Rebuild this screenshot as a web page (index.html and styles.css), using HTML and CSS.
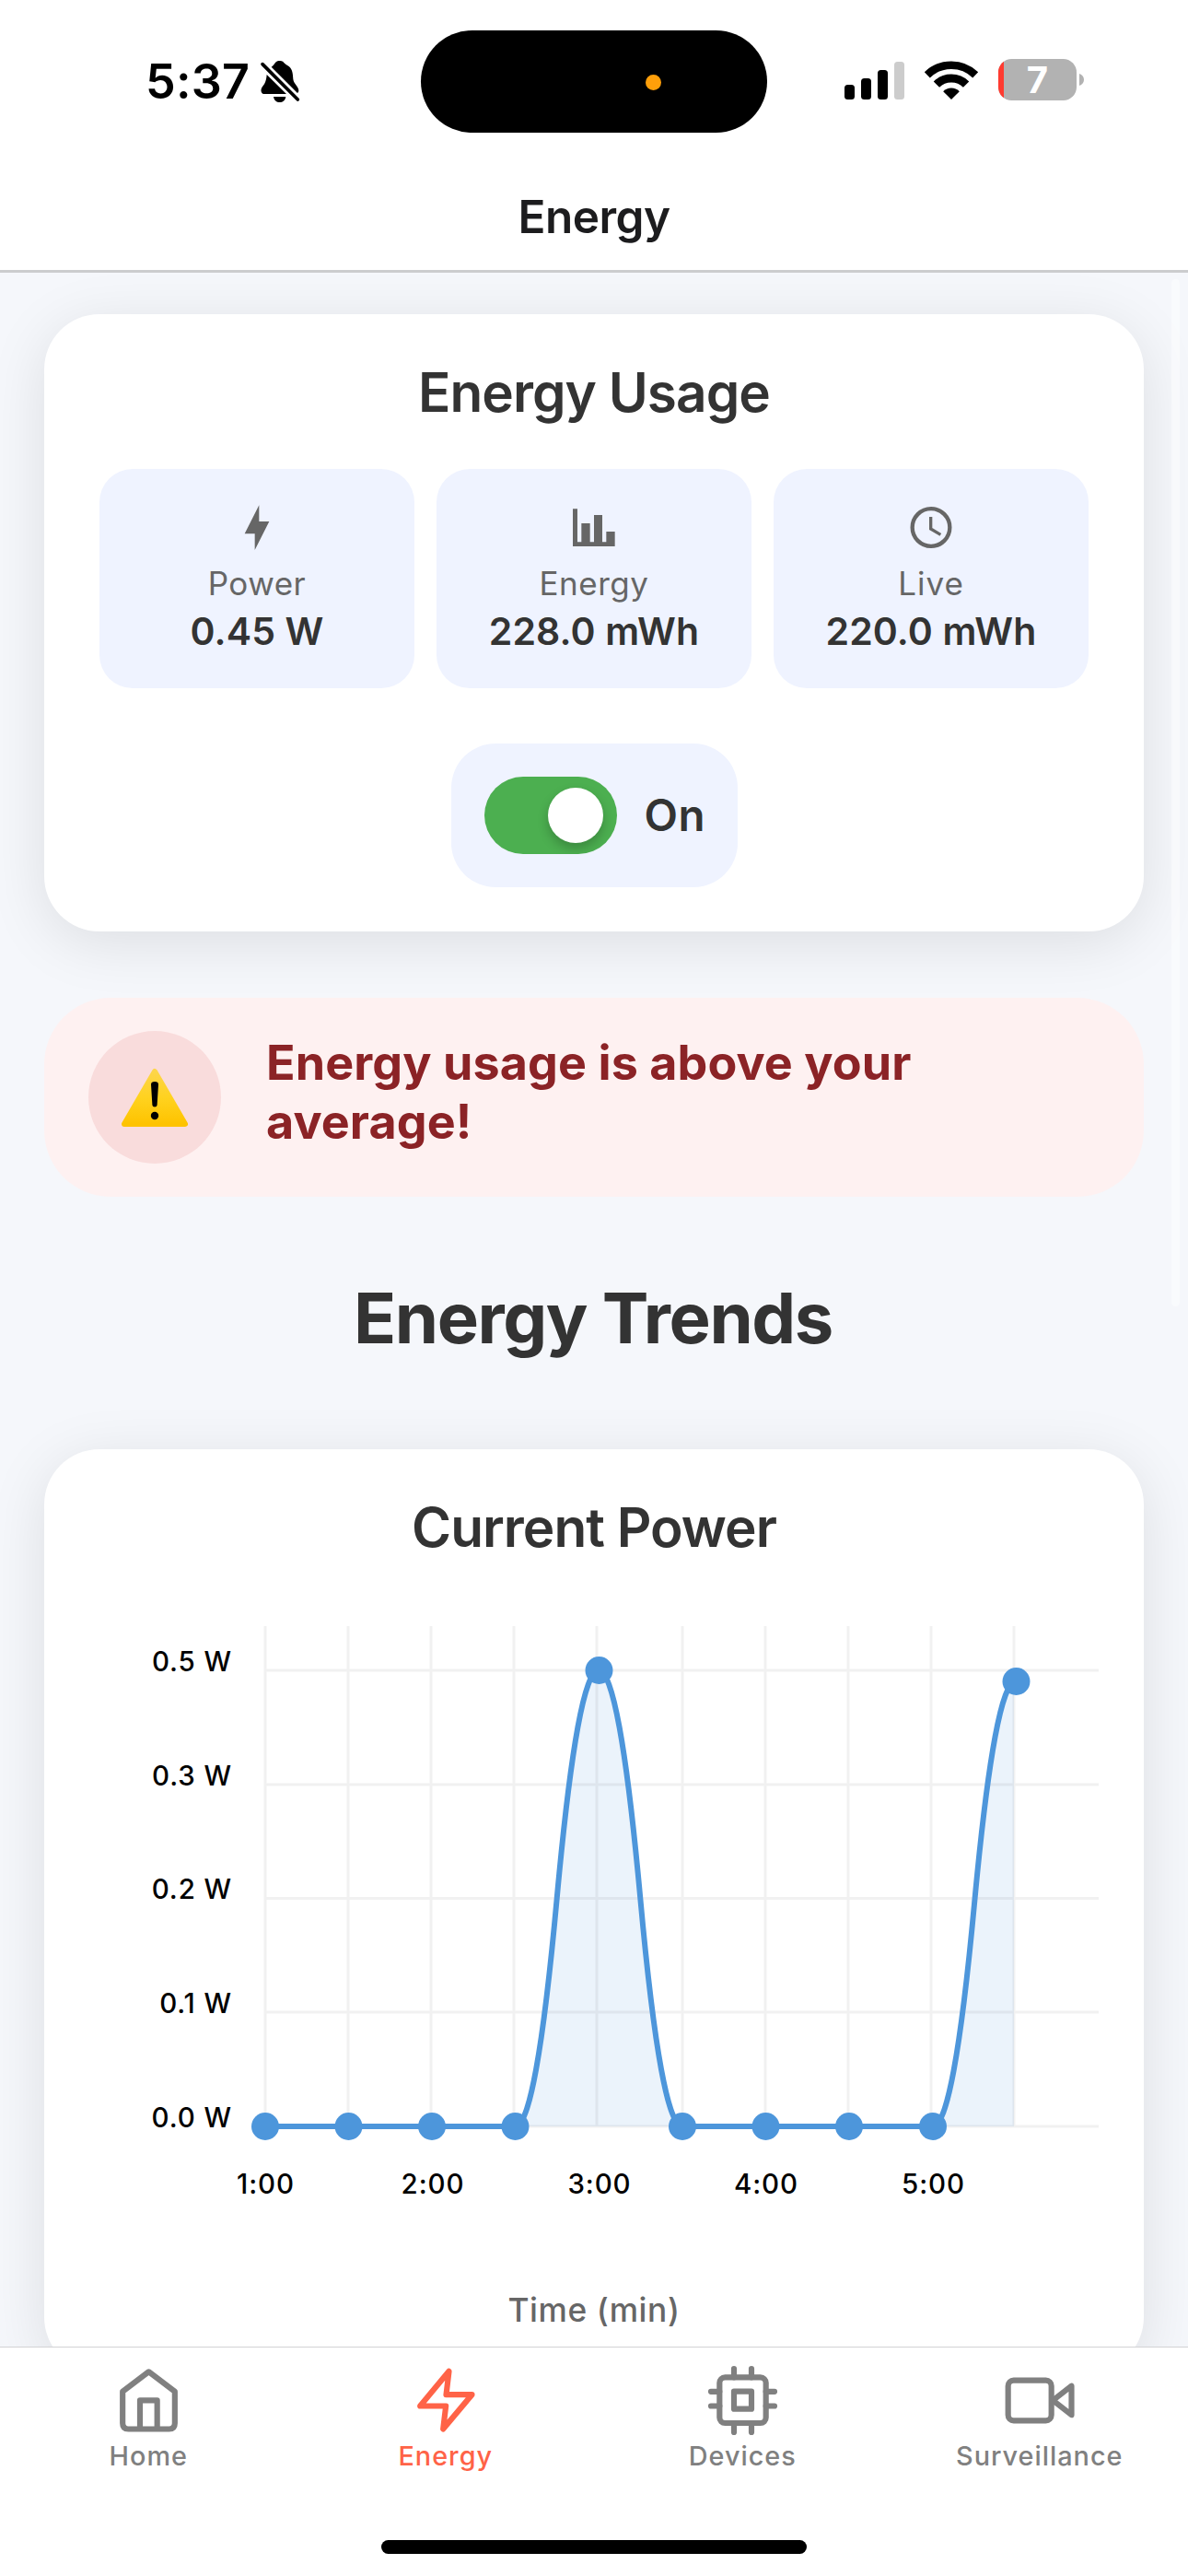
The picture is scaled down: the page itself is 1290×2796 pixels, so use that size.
FILE: index.html
```html
<!DOCTYPE html>
<html lang="en">
<head>
<meta charset="utf-8">
<title>Energy</title>
<link rel="stylesheet" href="styles.css">
</head>
<body>
<header class="header">
  <div class="status">
    <div class="status-left">
      <span class="clock">5:37</span>
      <svg class="bell" viewBox="0 0 135 145">
        <path d="M38 26C45 22 47 16 53 10C59 5 73 5 78 11C82 16 86 18 95 24C107 34 108 48 109 65C110 80 127 90 127 103C127 107 125 110 123 111Z"/>
        <path d="M23 51C21 70 19 78 9 90C3 98 2 110 12 114H87Z"/>
        <path d="M45 123H85C83 136 75 141 65 141S47 136 45 123Z"/>
        <path d="M9 17L124 132" fill="none" stroke="#000" stroke-width="11" stroke-linecap="round"/>
      </svg>
    </div>
    <div class="island"><span class="mic-dot"></span></div>
    <div class="status-right">
      <svg class="signal" viewBox="0 0 65 42">
        <rect x="0" y="26" width="11" height="16" rx="3.5"/>
        <rect x="18" y="19" width="11" height="23" rx="3.5"/>
        <rect x="36" y="10" width="11" height="32" rx="3.5"/>
        <rect x="54" y="1" width="11" height="41" rx="3.5" fill="#ccc"/>
      </svg>
      <svg class="wifi" viewBox="0 0 58 42">
        <path d="M2.8 15.3A37.7 37.7 0 0 1 55.2 15.3" fill="none" stroke="#000" stroke-width="8.6"/>
        <path d="M12.9 25.6A23 23 0 0 1 45.1 25.6" fill="none" stroke="#000" stroke-width="9"/>
        <path d="M29 42L20.2 33.2A12.6 12.6 0 0 1 37.8 33.2Z"/>
      </svg>
      <svg class="battery" viewBox="0 0 93 45">
        <defs><clipPath id="cell"><rect width="85" height="45" rx="14.5"/></clipPath></defs>
        <g clip-path="url(#cell)"><rect width="85" height="45" fill="#b2b2b2"/><rect width="6" height="45" fill="#ff3b30"/></g>
        <path d="M88 16C91 17 93 19.500 93 22.500S91 28 88 29Z" fill="#b2b2b2"/>
        <text class="battery-level" x="42.500" y="37">7</text>
      </svg>
    </div>
  </div>
  <h1 class="title">Energy</h1>
</header>

<main class="content">
  <section class="card usage">
    <h2 class="card-title">Energy Usage</h2>
    <div class="tiles">
      <div class="tile">
        <svg viewBox="0 0 162 162"><path d="M88 10V63H121L74 156V103H41Z"/></svg>
        <span class="tile-label">Power</span>
        <span class="tile-value">0.45 W</span>
      </div>
      <div class="tile">
        <svg viewBox="0 0 162 162"><path d="M12 22H27V130H40V69H68V130H81V42H108V130H121V96H149V144H12Z"/></svg>
        <span class="tile-label">Energy</span>
        <span class="tile-value">228.0 mWh</span>
      </div>
      <div class="tile">
        <svg viewBox="0 0 162 162" fill="none" stroke="#666"><circle cx="81" cy="82.500" r="61" stroke-width="13" fill="none"/><path d="M80 48V87L112 106" stroke-width="10" fill="none"/></svg>
        <span class="tile-label wide">Live</span>
        <span class="tile-value">220.0 mWh</span>
      </div>
    </div>
    <div class="switch-box">
      <div class="switch"><span class="knob"></span></div>
      <span class="switch-label">On</span>
    </div>
  </section>

  <section class="alert">
    <div class="alert-icon">
      <svg viewBox="0 0 72 63">
        <defs><linearGradient id="sun" x1="0" y1="0" x2="0" y2="1"><stop offset="0" stop-color="#fdd54a"/><stop offset=".5" stop-color="#ffd21f"/><stop offset="1" stop-color="#fec300"/></linearGradient></defs>
        <path d="M36 3L69 60H3Z" fill="url(#sun)" stroke="url(#sun)" stroke-width="6" stroke-linejoin="round"/>
        <path d="M32 17Q32 14 36 14T40 17L38.600 39.500Q38.500 41.500 36 41.500T33.400 39.500Z"/>
        <circle cx="36" cy="51" r="4.200"/>
      </svg>
    </div>
    <p class="alert-text">Energy usage is above your average!</p>
  </section>

  <h2 class="section-title">Energy Trends</h2>

  <section class="card power">
    <h2 class="card-title">Current Power</h2>
    <svg class="chart" viewBox="0 0 1194 786">
      <path class="fill" d="M240 614H511.500Q534.100 614 556.700 366.500T602 119Q624.600 119 647.300 366.500T693 614H965Q987.600 614 1010 372.500Q1032 131 1053 131V614Z"/>
      <path class="grid" d="M240 119H1145M240 243H1145M240 366.500H1145M240 490H1145M240 614H1145M240 71V614M330 71V614M420 71V614M510 71V614M600 71V614M693 71V614M783 71V614M873 71V614M963 71V614M1053 71V614"/>
      <path class="line" d="M240 614H511.500Q534.100 614 556.700 366.500Q579.400 119 602 119Q624.600 119 647.300 366.500Q669.900 614 693 614H965Q987.600 614 1010 372.500Q1032.500 131 1055 131"/>
      <g class="dots">
        <circle cx="240" cy="614" r="15"/><circle cx="330.500" cy="614" r="15"/><circle cx="421" cy="614" r="15"/><circle cx="511.500" cy="614" r="15"/><circle cx="602.500" cy="119" r="15"/><circle cx="693" cy="614" r="15"/><circle cx="783.500" cy="614" r="15"/><circle cx="874" cy="614" r="15"/><circle cx="965" cy="614" r="15"/><circle cx="1055.500" cy="131" r="15"/>
      </g>
      <g class="y-labels">
        <text x="204" y="119.500">0.5 W</text><text x="204" y="243.500">0.3 W</text><text x="204" y="367">0.2 W</text><text x="204" y="491">0.1 W</text><text x="204" y="614.500">0.0 W</text>
      </g>
      <g class="x-labels">
        <text x="240.500" y="686.500">1:00</text><text x="422" y="686.500">2:00</text><text x="603" y="686.500">3:00</text><text x="784" y="686.500">4:00</text><text x="965.500" y="686.500">5:00</text>
      </g>
    </svg>
    <p class="axis-title">Time (min)</p>
  </section>
  <span class="scrollbar"></span>
</main>

<nav class="tabs">
  <a class="tab">
    <svg viewBox="0 0 225 225"><path d="M112.500 19L197.500 83V187Q197.500 205.500 179 205.500H46Q27.500 205.500 27.500 187V83ZM84 205.500V112H140V205.500"/></svg>
    <span>Home</span>
  </a>
  <a class="tab active">
    <svg viewBox="0 0 225 225"><path d="M124.500 17.500L115.500 93.500H199.500L105.500 205.500L114.500 130.500H30.500Z"/></svg>
    <span>Energy</span>
  </a>
  <a class="tab">
    <svg viewBox="0 0 225 225"><rect x="37" y="37" width="151" height="149" rx="18"/><rect x="84" y="83" width="57" height="57"/><path d="M84 9V37M141 9V37M84 186V216M141 186V216M9 83.500H37M9 130.500H37M188 83.500H216M188 130.500H216"/></svg>
    <span>Devices</span>
  </a>
  <a class="tab">
    <svg viewBox="0 0 225 225"><rect x="11" y="47" width="141" height="131" rx="18"/><path d="M157 112L217.500 65V159.500Z"/></svg>
    <span>Surveillance</span>
  </a>
  <span class="home-indicator"></span>
</nav>
</body>
</html>
```
FILE: styles.css
```css
* { box-sizing: border-box; margin: 0; padding: 0; }
body {
  width: 1290px;
  height: 2796px;
  display: flex;
  flex-direction: column;
  overflow: hidden;
  background: #f5f7fb;
  color: #333;
  font-family: Inter, "Liberation Sans", sans-serif;
}
svg { display: block; overflow: visible; flex: none; }

.header { flex: none; background: #fff; border-bottom: 3px solid #cbccce; }
.status { position: relative; height: 177px; display: flex; align-items: center; justify-content: space-between; padding: 0 113px 0 158px; color: #000; }
.status-left { display: flex; align-items: center; gap: 11px; }
.clock { font-size: 52px; font-weight: 600; letter-spacing: .2px; line-height: 64px; }
.bell { width: 45px; height: 48.300px; }
.island { position: absolute; left: 457px; top: 33px; width: 376px; height: 111px; border-radius: 56px; background: #000; }
.mic-dot { position: absolute; left: 244px; top: 48px; width: 17px; height: 17px; border-radius: 50%; background: #ff9f0a; }
.status-right { display: flex; align-items: center; gap: 22px; padding-bottom: 4px; }
.signal { width: 65px; height: 42px; }
.wifi { width: 58px; height: 42px; }
.battery { width: 93px; height: 45px; }
.battery-level { font-size: 40px; font-weight: 700; fill: #fff; text-anchor: middle; }
.title { height: 116px; line-height: 116px; text-align: center; font-size: 49.500px; font-weight: 600; letter-spacing: -.5px; color: #1c1c1e; }

.content { position: relative; flex: 1; min-height: 0; overflow: hidden; padding: 45px 48px 0; }
.card { background: #fff; border-radius: 60px; box-shadow: 0 12px 64px rgba(0, 0, 0, .1); }
.card-title { font-size: 58.500px; font-weight: 600; letter-spacing: -.97px; line-height: 73px; text-align: center; }
.usage { height: 670px; padding: 48px 60px; display: flex; flex-direction: column; align-items: center; }
.tiles { align-self: stretch; display: grid; grid-template-columns: repeat(3, 1fr); gap: 24px; margin-top: 47px; }
.tile { height: 238px; padding-top: 36px; border-radius: 36px; background: #eff3ff; display: flex; flex-direction: column; align-items: center; }
.tile svg { width: 54px; height: 54px; fill: #666; }
.tile-label { margin-top: 12px; font-size: 35px; line-height: 44px; letter-spacing: .5px; color: #666; }
.tile-label.wide { letter-spacing: 1px; }
.tile-value { margin-top: 5px; font-size: 41px; font-weight: 600; line-height: 50px; letter-spacing: .1px; }
.switch-box { margin-top: 60px; width: 311px; height: 156px; border-radius: 48px; background: #eff3ff; display: flex; align-items: center; gap: 30px; padding: 0 36px; }
.switch { flex: none; width: 144px; height: 84px; border-radius: 42px; background: #4caf50; display: flex; align-items: center; justify-content: flex-end; padding-right: 15px; overflow: hidden; }
.knob { width: 60px; height: 60px; border-radius: 50%; background: #fff; box-shadow: 0 6px 12px rgba(0, 0, 0, .22); }
.switch-label { font-size: 47.500px; font-weight: 600; letter-spacing: .5px; line-height: 60px; }

.alert { margin-top: 72px; height: 216px; border-radius: 72px; background: #fef1f1; display: flex; align-items: center; gap: 49px; padding: 0 48px; }
.alert-icon { flex: none; width: 144px; height: 144px; border-radius: 50%; background: #f9dcdc; display: flex; align-items: center; justify-content: center; }
.alert-icon svg { width: 72px; height: 63px; }
.alert-text { width: 760px; padding-bottom: 10px; font-size: 52px; font-weight: 700; line-height: 64px; letter-spacing: .1px; color: #8b2326; }

.section-title { margin-top: 83px; line-height: 96px; font-size: 76px; font-weight: 700; letter-spacing: -1.4px; text-align: center; padding-right: 2px; }
.power { margin-top: 95px; height: 1002px; padding-top: 48px; }
.chart { width: 1194px; height: 786px; }
.fill { fill: #ebf3fb; }
.grid { fill: none; stroke: #000; stroke-opacity: .055; stroke-width: 3; }
.line { fill: none; stroke: #4d96db; stroke-width: 6; }
.dots { fill: #4d96db; }
.y-labels, .x-labels { font-size: 29.500px; font-weight: 500; fill: #000; letter-spacing: .9px; }
.y-labels { text-anchor: end; }
.x-labels { text-anchor: middle; }
.axis-title { margin-top: 6px; text-align: center; font-size: 35.300px; font-weight: 500; line-height: 44px; letter-spacing: .6px; color: #666; }
.scrollbar { position: absolute; left: 1272px; top: 7px; width: 9px; height: 1115px; border-radius: 5px; background: rgba(255, 255, 255, .45); }

.tabs { position: relative; flex: none; height: 249px; background: #fff; border-top: 1px solid #d2d2d4; display: flex; }
.tab { flex: 1; display: flex; flex-direction: column; align-items: center; padding-top: 20px; color: #808080; }
.tab svg { width: 75px; height: 75px; fill: none; stroke: currentColor; stroke-width: 18.500; stroke-linecap: round; stroke-linejoin: round; }
.tab span { margin-top: 5px; font-size: 28.800px; font-weight: 500; line-height: 36px; letter-spacing: 1px; }
.tab.active { color: #ff6347; }
.home-indicator { position: absolute; left: 414px; top: 209px; width: 462px; height: 15px; border-radius: 8px; background: #000; }
```
